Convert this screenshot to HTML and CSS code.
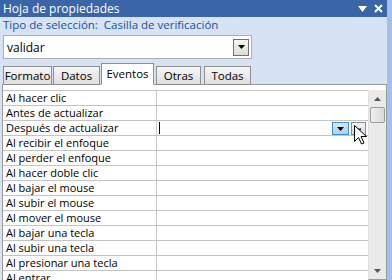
FILE: index.html
```html
<!DOCTYPE html>
<html lang="es">
<head>
<meta charset="utf-8">
<title>Hoja de propiedades</title>
<link rel="stylesheet" href="styles.css">
</head>
<body>
<div class="window">
  <div class="main">
    <div class="titlebar">
      <span class="title">Hoja de propiedades</span>
      <span class="tb-icons">
        <svg width="9" height="6" viewBox="0 0 9 6"><path d="M0 0H9L4.5 6Z" fill="#fff"/></svg>
        <svg width="9" height="9" viewBox="0 0 9 9"><path d="M1 1L8 8M8 1L1 8" stroke="#fff" stroke-width="2"/></svg>
      </span>
    </div>
    <div class="seltype">Tipo de selección:&nbsp; Casilla de verificación</div>
    <div class="combo">
      <span class="combo-text">validar</span>
      <span class="combo-btn"><svg width="7" height="4" viewBox="0 0 7 4"><path d="M0 0H7L3.5 4Z" fill="#000"/></svg></span>
    </div>
    <div class="tabs">
      <div class="tab t1">Formato</div>
      <div class="tab t2">Datos</div>
      <div class="tab active t3">Eventos</div>
      <div class="tab t4">Otras</div>
      <div class="tab t5">Todas</div>
    </div>
    <div class="panel">
      <div class="gridwrap">
        <div class="grid">
          <div class="row"><div class="lbl">Al hacer clic</div><div class="val"></div></div>
          <div class="row"><div class="lbl">Antes de actualizar</div><div class="val"></div></div>
          <div class="row"><div class="lbl">Después de actualizar</div><div class="val active-val"><span class="caret"></span><span class="vbtn drop"><svg width="7" height="4" viewBox="0 0 7 4"><path d="M0 0H7L3.5 4Z" fill="#000"/></svg></span><span class="vbtn build">··</span>
            <svg class="cursor" width="13" height="20" viewBox="0 0 13 20"><path d="M0.5 0.5V16.5L4.5 12.5L7.5 19L10 18L7 11.5H12.5Z" fill="#fff" stroke="#000" stroke-width="1"/></svg></div></div>
          <div class="row"><div class="lbl">Al recibir el enfoque</div><div class="val"></div></div>
          <div class="row"><div class="lbl">Al perder el enfoque</div><div class="val"></div></div>
          <div class="row"><div class="lbl">Al hacer doble clic</div><div class="val"></div></div>
          <div class="row"><div class="lbl">Al bajar el mouse</div><div class="val"></div></div>
          <div class="row"><div class="lbl">Al subir el mouse</div><div class="val"></div></div>
          <div class="row"><div class="lbl">Al mover el mouse</div><div class="val"></div></div>
          <div class="row"><div class="lbl">Al bajar una tecla</div><div class="val"></div></div>
          <div class="row"><div class="lbl">Al subir una tecla</div><div class="val"></div></div>
          <div class="row"><div class="lbl">Al presionar una tecla</div><div class="val"></div></div>
          <div class="row"><div class="lbl">Al entrar</div><div class="val"></div></div>
        </div>
        <div class="scrollbar">
          <div class="sb-arrow"><svg width="7" height="4" viewBox="0 0 7 4"><path d="M3.5 0L7 4H0Z" fill="#555"/></svg></div>
          <div class="sb-thumb"></div>
          <div class="sb-track"></div>
          <div class="sb-arrow"><svg width="7" height="4" viewBox="0 0 7 4"><path d="M0 0H7L3.5 4Z" fill="#555"/></svg></div>
        </div>
      </div>
    </div>
  </div>
  <div class="edge"></div>
</div>
</body>
</html>
```
FILE: styles.css
```css
* { box-sizing: border-box; }
html, body { margin: 0; padding: 0; }
body {
  width: 392px;
  height: 280px;
  overflow: hidden;
  font-family: "Open Sans", "Noto Sans", sans-serif;
  font-size: 11px;
  color: #000;
  background: #d6e3f5;
}
.window { display: flex; height: 280px; }
.main { width: 387px; display: flex; flex-direction: column; }
.main > * { flex-shrink: 0; }
.edge { width: 5px; background: #a4c0ea; }
.titlebar {
  height: 17px;
  background: #3a65a6;
  color: #fff;
  font-size: 12px;
  line-height: 17px;
  padding-left: 3px;
  display: flex;
  justify-content: space-between;
  align-items: center;
}
.tb-icons { display: flex; align-items: center; gap: 7px; padding-right: 4px; }
.seltype {
  height: 16px;
  line-height: 16px;
  padding-left: 3px;
  color: #2150a0;
  font-size: 11.5px;
}
.combo {
  margin: 2px 0 0 3px;
  width: 249px;
  height: 24px;
  background: #fff;
  border: 1px solid #abadb3;
  display: flex;
  align-items: center;
  justify-content: space-between;
  padding: 0 2px 0 3px;
  font-size: 12px;
}
.combo-btn {
  width: 16px;
  height: 17px;
  border: 1px solid #707070;
  background: linear-gradient(#f4f4f4, #dcdcdc);
  display: flex;
  align-items: center;
  justify-content: center;
}
.tabs {
  display: flex;
  align-items: flex-end;
  height: 26px;
  padding-left: 3px;
  gap: 1px;
  position: relative;
  z-index: 1;
  margin-bottom: -1px;
}
.tab {
  height: 19px;
  line-height: 17px;
  text-align: center;
  border: 1px solid #8f8f8f;
  background: linear-gradient(#f6f6f6, #dedede);
  font-size: 11.5px;
}
.t1 { width: 49px; }
.t2 { width: 47px; }
.t3 { width: 53px; }
.t4 { width: 45px; margin-left: 1px; }
.t5 { width: 47px; margin-left: 2px; }
.tab.active {
  height: 22px;
  background: #fff;
  border-bottom-color: #fff;
  line-height: 19px;
}
.panel {
  flex: 1 1 auto;
  min-height: 0;
  overflow: hidden;
  margin-left: 2px;
  width: 385px;
  background: #fff;
  border: 1px solid #9a9a9a;
  border-bottom: none;
  padding: 5px 0 0 0;
}
.gridwrap { display: flex; height: 100%; }
.grid {
  width: 366px;
  border-top: 1px solid #c4c4c4;
}
.row {
  display: flex;
  height: 15px;
  border-bottom: 1px solid #c4c4c4;
}
.lbl {
  width: 154px;
  border-right: 1px solid #c4c4c4;
  padding-left: 3px;
  line-height: 14px;
  white-space: nowrap;
}
.val { flex: 1; position: relative; }
.active-val { display: flex; align-items: center; }
.caret {
  width: 1px;
  height: 12px;
  background: #000;
  margin-left: 2px;
}
.vbtn {
  position: absolute;
  top: 1px;
  height: 13px;
  display: flex;
  align-items: center;
  justify-content: center;
}
.drop {
  left: 175px;
  width: 17px;
  background: linear-gradient(#d6eafb, #aad2f3);
  border: 1px solid #3c8fd6;
}
.build {
  left: 194px;
  width: 15px;
  border: 1px solid #8a8a8a;
  background: linear-gradient(#f4f4f4, #dcdcdc);
  font-weight: bold;
  font-size: 11px;
  line-height: 10px;
  letter-spacing: -1px;
}
.cursor { position: absolute; left: 197px; top: 4px; }
.scrollbar {
  width: 18px;
  display: flex;
  flex-direction: column;
  background: #eaeaea;
  border-left: 1px solid #e0e0e0;
  border-bottom: 1px solid #9a9a9a;
}
.sb-arrow {
  height: 17px;
  flex-shrink: 0;
  display: flex;
  align-items: center;
  justify-content: center;
}
.sb-thumb {
  height: 16px;
  flex-shrink: 0;
  margin: 0 1px;
  border: 1px solid #9c9c9c;
  border-radius: 2px;
  background: linear-gradient(90deg, #f0f0f0, #dadada);
}
.sb-track { flex: 1; }
```
